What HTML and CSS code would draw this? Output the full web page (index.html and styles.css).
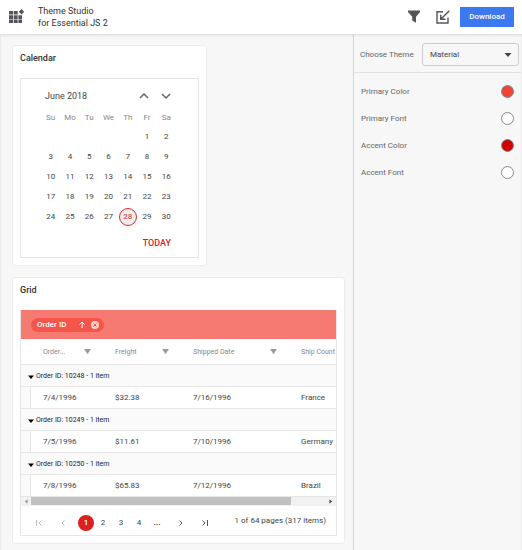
FILE: index.html
```html
<!DOCTYPE html>
<html lang="en">
<head>
<meta charset="utf-8">
<title>Theme Studio for Essential JS 2</title>
<link rel="stylesheet" href="styles.css">
</head>
<body>
<header class="topbar">
  <svg class="logo" width="16" height="16" viewBox="0 0 16 16" fill="#55555c" aria-hidden="true">
    <path d="M0 2h4v3.600H0zM4.700 2h4v3.600h-4zM0 6.300h4v3.600H0zM4.700 6.300h4v3.600h-4zM9.400 6.300h3.600v3.600H9.400zM0 10.600h4v3.400H0zM4.700 10.600h4v3.400h-4zM9.400 10.600h3.600v3.400H9.400zM12.500 0L15.200 2.700 12.500 5.400 9.800 2.700z"/>
  </svg>
  <h1 class="title">Theme Studio<br>for Essential JS 2</h1>
  <button class="icon-button" aria-label="Filter">
    <svg width="12" height="14" viewBox="0 0 12 14" fill="#555"><path d="M0 0.500h12v1.500L8 6.700v6L4.200 10.500V6.700L0 2z"/></svg>
  </button>
  <button class="icon-button" aria-label="Import">
    <svg width="14" height="14" viewBox="0 0 14 14" fill="none" stroke="#555" stroke-width="1.400"><path d="M7 1.700H1v11.300h11V7.500M13.300 0.700L5 9M4.700 4.700v4.600h4.800"/></svg>
  </button>
  <button class="download">Download</button>
</header>
<div class="layout">
  <main class="content">
    <section class="card card-calendar">
      <h2 class="card-title">Calendar</h2>
      <div class="calendar">
        <div class="calendar-head">
          <span class="month">June 2018</span>
          <button class="icon-button" aria-label="Previous month"><svg width="10" height="6" viewBox="0 0 10 6" fill="none" stroke="#666" stroke-width="1.500"><path d="M1 5l4-4 4 4"/></svg></button>
          <button class="icon-button" aria-label="Next month"><svg width="10" height="6" viewBox="0 0 10 6" fill="none" stroke="#666" stroke-width="1.500"><path d="M1 1l4 4 4-4"/></svg></button>
        </div>
        <table class="days">
          <thead><tr><th>Su</th><th>Mo</th><th>Tu</th><th>We</th><th>Th</th><th>Fr</th><th>Sa</th></tr></thead>
          <tbody>
            <tr><td></td><td></td><td></td><td></td><td></td><td>1</td><td>2</td></tr>
            <tr><td>3</td><td>4</td><td>5</td><td>6</td><td>7</td><td>8</td><td>9</td></tr>
            <tr><td>10</td><td>11</td><td>12</td><td>13</td><td>14</td><td>15</td><td>16</td></tr>
            <tr><td>17</td><td>18</td><td>19</td><td>20</td><td>21</td><td>22</td><td>23</td></tr>
            <tr><td>24</td><td>25</td><td>26</td><td>27</td><td><span class="selected">28</span></td><td>29</td><td>30</td></tr>
          </tbody>
        </table>
        <button class="today">TODAY</button>
      </div>
    </section>

    <section class="card card-grid">
      <h2 class="card-title">Grid</h2>
      <div class="grid">
        <div class="group-bar">
          <div class="chip">
            <span class="chip-label">Order ID</span>
            <svg width="6" height="7" viewBox="0 0 6 7" fill="none" stroke="#fff" stroke-width="1"><path d="M3 7V1M0.500 3.500L3 1l2.500 2.500"/></svg>
            <button class="icon-button" aria-label="Ungroup"><svg width="8" height="8" viewBox="0 0 8 8"><circle cx="4" cy="4" r="4" fill="#fcd0cd"/><path d="M2.500 2.500l3 3M5.500 2.500l-3 3" stroke="#f5564c" stroke-width="1"/></svg></button>
          </div>
        </div>
        <table class="orders">
          <colgroup><col class="col-indent"><col class="col-order"><col class="col-freight"><col class="col-shipped"><col class="col-country"></colgroup>
          <thead>
            <tr>
              <th></th>
              <th><div class="head-cell">Order...<svg class="funnel" width="7" height="5" viewBox="0 0 7 5"><path d="M0.500 0h6v1L4.500 3.200V4.500h-2V3.200L0.500 1z"/></svg></div></th>
              <th><div class="head-cell">Freight<svg class="funnel" width="7" height="5" viewBox="0 0 7 5"><path d="M0.500 0h6v1L4.500 3.200V4.500h-2V3.200L0.500 1z"/></svg></div></th>
              <th><div class="head-cell">Shipped Date<svg class="funnel" width="7" height="5" viewBox="0 0 7 5"><path d="M0.500 0h6v1L4.500 3.200V4.500h-2V3.200L0.500 1z"/></svg></div></th>
              <th class="last">Ship Count</th>
            </tr>
          </thead>
          <tbody>
            <tr class="group"><td colspan="5"><svg class="caret" width="6" height="4" viewBox="0 0 6 4"><path d="M0 0.500h6L3 4z"/></svg>Order ID: 10248 - 1 item</td></tr>
            <tr class="item"><td class="indent"></td><td>7/4/1996</td><td>$32.38</td><td>7/16/1996</td><td>France</td></tr>
            <tr class="group"><td colspan="5"><svg class="caret" width="6" height="4" viewBox="0 0 6 4"><path d="M0 0.500h6L3 4z"/></svg>Order ID: 10249 - 1 item</td></tr>
            <tr class="item"><td class="indent"></td><td>7/5/1996</td><td>$11.61</td><td>7/10/1996</td><td>Germany</td></tr>
            <tr class="group"><td colspan="5"><svg class="caret" width="6" height="4" viewBox="0 0 6 4"><path d="M0 0.500h6L3 4z"/></svg>Order ID: 10250 - 1 item</td></tr>
            <tr class="item"><td class="indent"></td><td>7/8/1996</td><td>$65.83</td><td>7/12/1996</td><td>Brazil</td></tr>
          </tbody>
        </table>
        <div class="scrollbar" aria-hidden="true">
          <svg width="10" height="9" viewBox="0 0 10 9" fill="#888"><path d="M6.500 2.500v4l-2.500-2z"/></svg>
          <div class="track"><div class="thumb"></div></div>
          <svg width="10" height="9" viewBox="0 0 10 9" fill="#333"><path d="M3.500 2.500v4l2.500-2z"/></svg>
        </div>
        <nav class="pager" aria-label="Pages">
          <button class="page" aria-label="First page" disabled><svg width="6" height="6" viewBox="0 0 6 6"><path d="M0.500 0v6M5.500 0.500L3 3l2.500 2.500"/></svg></button>
          <button class="page page-step" aria-label="Previous page" disabled><svg width="4" height="6" viewBox="0 0 4 6"><path d="M3.500 0.500L1 3l2.500 2.500"/></svg></button>
          <button class="page current">1</button>
          <button class="page">2</button>
          <button class="page">3</button>
          <button class="page">4</button>
          <button class="page more">...</button>
          <button class="page page-step" aria-label="Next page"><svg width="4" height="6" viewBox="0 0 4 6"><path d="M0.500 0.500L3 3 0.500 5.500"/></svg></button>
          <button class="page" aria-label="Last page"><svg width="6" height="6" viewBox="0 0 6 6"><path d="M0.500 0.500L3 3 0.500 5.500M5.500 0v6"/></svg></button>
          <span class="summary">1 of 64 pages (317 items)</span>
        </nav>
      </div>
    </section>
  </main>

  <aside class="panel">
    <div class="theme-row">
      <label for="theme">Choose Theme</label>
      <div class="select-box">
        <select id="theme"><option>Material</option></select>
        <svg class="select-arrow" width="8" height="4" viewBox="0 0 8 4" fill="#444" aria-hidden="true"><path d="M0.500 0h7L4 4z"/></svg>
      </div>
    </div>
    <div class="options">
      <div class="option"><span>Primary Color</span><button class="swatch swatch-primary" aria-label="Primary Color"></button></div>
      <div class="option"><span>Primary Font</span><button class="swatch" aria-label="Primary Font"></button></div>
      <div class="option"><span>Accent Color</span><button class="swatch swatch-accent" aria-label="Accent Color"></button></div>
      <div class="option"><span>Accent Font</span><button class="swatch" aria-label="Accent Font"></button></div>
    </div>
  </aside>
</div>
</body>
</html>
```

FILE: styles.css
```css
* { box-sizing: border-box; }

body {
  margin: 0;
  min-height: 100vh;
  display: flex;
  flex-direction: column;
  background: #f7f7f7;
  color: #444;
  font: 8px/10px Roboto, sans-serif;
}

button {
  border: 0;
  padding: 0;
  background: none;
  color: inherit;
  font: inherit;
}

svg { display: block; }

.icon-button { display: flex; }

.topbar {
  position: relative;
  display: flex;
  align-items: center;
  height: 34px;
  padding: 0 8px 0 9px;
  background: #fff;
  box-shadow: 0 1px 3px rgba(0, 0, 0, 0.12);
}

.title {
  flex: 1;
  margin: 0 0 0 13px;
  color: #333;
  font-size: 9px;
  font-weight: 400;
  line-height: 12px;
}

.topbar .icon-button { margin-right: 16px; }
.topbar .icon-button + .icon-button { margin-right: 10px; }

.download {
  width: 54px;
  height: 20px;
  background: #3c78ef;
  color: #fff;
  font-size: 8px;
  font-weight: 500;
}

.layout {
  flex: 1;
  display: flex;
  border: solid #ececec;
  border-width: 0 1px;
}

.content {
  flex: 1;
  min-width: 0;
  padding: 11px 8px 6px 11px;
}

.card {
  padding: 7px;
  border: 1px solid #ececec;
  border-radius: 3px;
  background: #fff;
}

.card-calendar { width: 195px; margin-bottom: 11px; }

.card-title {
  margin: 0 0 15px;
  color: #333;
  font-size: 9px;
  font-weight: 500;
  line-height: 10px;
}

.calendar {
  padding: 12px 22px 9px 20px;
  border: 1px solid #e4e4e4;
}

.calendar-head {
  display: flex;
  align-items: center;
  height: 10px;
  padding: 0 5px 0 4px;
}

.month {
  flex: 1;
  font-size: 9px;
}

.calendar-head .icon-button + .icon-button { margin-left: 12px; }

.days {
  width: 100%;
  margin-top: 8px;
  table-layout: fixed;
  border-collapse: collapse;
  text-align: center;
}

.days th {
  height: 18px;
  padding: 0;
  color: #888;
  font-weight: 400;
}

.days td { height: 20px; padding: 0; }

.selected {
  display: block;
  width: 18px;
  height: 18px;
  margin: 0 auto;
  border: 1px solid #dd2c2c;
  border-radius: 50%;
  background: #eee;
  color: #dd2c2c;
  line-height: 16px;
}

.today {
  display: block;
  margin: 11px 5px 0 auto;
  color: #d9201f;
  font-size: 9px;
  font-weight: 500;
}

.grid { border: 1px solid #e6e6e6; border-top: 0; }

.group-bar {
  display: flex;
  align-items: center;
  height: 29px;
  padding: 0 10px;
  background: #f67a72;
}

.chip {
  display: flex;
  align-items: center;
  width: 73px;
  height: 14px;
  padding: 0 5px 0 6px;
  border-radius: 7px;
  background: #f5564c;
  color: #fff;
}

.chip-label { flex: 1; font-weight: 500; }
.chip .icon-button { margin-left: 6px; }

.orders {
  width: 100%;
  table-layout: fixed;
  border-collapse: separate;
  border-spacing: 0;
}

.col-indent { width: 10px; }
.col-order { width: 72px; }
.col-freight { width: 78px; }
.col-shipped { width: 108px; }

.orders th,
.orders td {
  height: 22px;
  padding: 0 0 0 12px;
  border-bottom: 1px solid #e6e6e6;
  text-align: left;
  white-space: nowrap;
}

.orders th {
  height: 26px;
  padding-right: 12px;
  color: #888;
  font-size: 7px;
  font-weight: 400;
}

.orders .last { padding-right: 0; }

.head-cell { display: flex; justify-content: space-between; align-items: center; }

.funnel { fill: #999; }

.orders .group td {
  padding-left: 7px;
  background: #fafafa;
  color: #222;
  font-size: 7px;
}

.caret { display: inline-block; margin-right: 2px; fill: #000; vertical-align: -1px; }

.orders .indent {
  padding: 0;
  border-right: 1px solid #e6e6e6;
  background: #fafafa;
}

.scrollbar {
  display: flex;
  height: 9px;
  background: #f1f1f1;
}

.track { flex: 1; }
.thumb { width: 88%; height: 8px; background: #c1c1c1; }

.pager {
  display: flex;
  align-items: center;
  height: 29px;
  padding: 4px 10px 0 9px;
}

.page {
  display: flex;
  align-items: center;
  justify-content: center;
  width: 18px;
  height: 16px;
}

.page svg { fill: none; stroke: #555; }
.page:disabled svg { stroke: #bbb; }
.page-step { margin: 0 6px; }
.more { font-weight: 700; }

.current {
  width: 16px;
  border-radius: 50%;
  background: #dc2020;
  color: #fff;
  font-weight: 500;
}

.summary { margin: 0 0 4px auto; }

.panel {
  width: 168px;
  border-left: 1px solid #d4d4d4;
  color: #666;
}

.theme-row {
  display: flex;
  align-items: center;
  justify-content: space-between;
  height: 39px;
  padding: 3px 2px 0 6px;
  border-bottom: 1px solid #e2e2e2;
}

.select-box { position: relative; }

select {
  display: block;
  width: 97px;
  height: 23px;
  padding: 0 7px;
  border: 1px solid #ccc;
  border-radius: 3px;
  background: transparent;
  color: #444;
  font: inherit;
  appearance: none;
}

.select-arrow {
  position: absolute;
  top: 10px;
  right: 7px;
  pointer-events: none;
}

.options { padding: 5px 7px; }

.option {
  display: flex;
  align-items: center;
  justify-content: space-between;
  height: 27px;
}

.swatch {
  width: 13px;
  height: 13px;
  border: 1px solid #888;
  border-radius: 50%;
  background: #fff;
}

.swatch-primary { background: #f44336; }
.swatch-accent { background: #d50000; }
```
